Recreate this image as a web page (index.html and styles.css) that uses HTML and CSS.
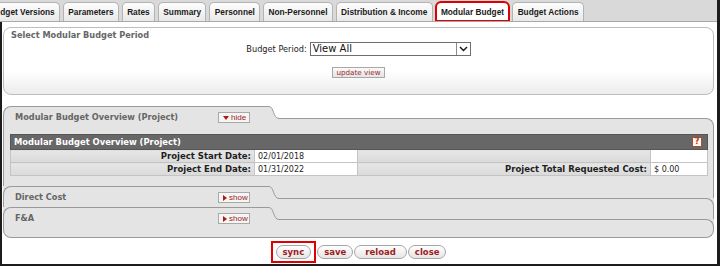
FILE: index.html
```html
<!DOCTYPE html>
<html>
<head>
<meta charset="utf-8">
<link rel="stylesheet" href="styles.css">
</head>
<body>
<div class="frame">
  <div class="tabs">
    <div class="tab first">dget Versions</div>
    <div class="tab">Parameters</div>
    <div class="tab">Rates</div>
    <div class="tab">Summary</div>
    <div class="tab">Personnel</div>
    <div class="tab">Non-Personnel</div>
    <div class="tab">Distribution &amp; Income</div>
    <div class="tab active">Modular Budget</div>
    <div class="tab">Budget Actions</div>
  </div>
  <div class="content">
    <div class="period">
      <div class="period-title">Select Modular Budget Period</div>
      <div class="period-row">
        <span class="period-label">Budget Period:</span>
        <span class="select"><span class="select-text">View All</span><span class="select-arrow"><svg width="9" height="6" viewBox="0 0 9 6"><path d="M1 1 L4.5 4.5 L8 1" fill="none" stroke="#111" stroke-width="1.4"/></svg></span></span>
      </div>
      <div class="period-btn-row"><span class="btn-update">update view</span></div>
    </div>

    <div class="panel">
      <div class="sec-head first-head">
        <div class="sec-tab"><span class="sec-title">Modular Budget Overview (Project)</span><span class="toggle"><svg width="6" height="4" viewBox="0 0 6 4"><path d="M0 0 L6 0 L3 4 Z" fill="#b01818"/></svg>hide</span></div>
        <svg class="curve" width="10" height="22" viewBox="0 0 10 22"><path d="M0 0.5 C5 0.5 4 12.5 10 12.5 L10 22 L0 22 Z" fill="#e4e4e4"/><path d="M0 0.5 C5 0.5 4 12.5 10 12.5" fill="none" stroke="#9a9a9a" stroke-width="1"/></svg>
        <div class="sec-right"><div class="sec-right-top"></div><div class="sec-right-line"></div></div>
      </div>
      <div class="sec-body">
        <table class="grid">
          <colgroup><col class="c1"><col class="c2"><col class="c3"><col class="c4"></colgroup>
          <tr class="hdr"><td colspan="4"><div class="hdr-in"><span>Modular Budget Overview (Project)</span><span class="help">?</span></div></td></tr>
          <tr><td class="lbl">Project Start Date:</td><td class="val">02/01/2018</td><td class="lbl"></td><td class="val"></td></tr>
          <tr><td class="lbl">Project End Date:</td><td class="val">01/31/2022</td><td class="lbl">Project Total Requested Cost:</td><td class="val">$ 0.00</td></tr>
        </table>
      </div>

      <div class="sec-head nested">
        <div class="sec-tab"><span class="sec-title">Direct Cost</span><span class="toggle"><svg width="4" height="6" viewBox="0 0 4 6"><path d="M0 0 L4 3 L0 6 Z" fill="#b01818"/></svg>show</span></div>
        <svg class="curve" width="10" height="21" viewBox="0 0 10 21"><path d="M0 0.5 C5 0.5 4 12.5 10 12.5" fill="none" stroke="#9a9a9a" stroke-width="1"/></svg>
        <div class="sec-right"><div class="sec-right-top"></div><div class="sec-right-line"></div></div>
      </div>

      <div class="sec-head nested">
        <div class="sec-tab"><span class="sec-title">F&amp;A</span><span class="toggle"><svg width="4" height="6" viewBox="0 0 4 6"><path d="M0 0 L4 3 L0 6 Z" fill="#b01818"/></svg>show</span></div>
        <svg class="curve" width="10" height="21" viewBox="0 0 10 21"><path d="M0 0.5 C5 0.5 4 12.5 10 12.5" fill="none" stroke="#9a9a9a" stroke-width="1"/></svg>
        <div class="sec-right"><div class="sec-right-top"></div><div class="sec-right-line"></div></div>
      </div>
      <div class="panel-foot"></div>
    </div>

    <div class="actions">
      <span class="mark"><span class="pill">sync</span></span>
      <span class="pill">save</span>
      <span class="pill wide">reload</span>
      <span class="pill">close</span>
    </div>
  </div>
</div>
</body>
</html>
```
FILE: styles.css
```css
* { box-sizing: border-box; }
html, body { margin: 0; padding: 0; background: #fff; }

.frame {
  width: 720px;
  height: 266px;
  border-right: 3px solid #1c1c1c;
  border-bottom: 2px solid #1c1c1c;
  overflow: hidden;
  display: flex;
  flex-direction: column;
  font-family: "DejaVu Sans", Verdana, sans-serif;
}

/* tabs */
.tabs {
  height: 22px;
  flex: none;
  background: #d9d9d9;
  border-bottom: 1px solid #a9a9a9;
  display: flex;
  align-items: flex-end;
  gap: 3px;
  overflow: hidden;
}
.tab {
  height: 19px;
  padding: 0 4.3px;
  border: 1px solid #b3b3b3;
  border-bottom: none;
  border-radius: 5px 5px 0 0;
  background: linear-gradient(#fdfdfd, #e9e9e9);
  font-family: "Liberation Sans", Arial, sans-serif;
  font-weight: bold;
  font-size: 8.3px;
  line-height: 18px;
  color: #1a1a1a;
  white-space: nowrap;
}
.tab.first { margin-left: -5px; }
.tab.active {
  background: #fff;
  outline: 2px solid #e10000;
  outline-offset: -1px;
}

/* content */
.content {
  flex: 1;
  border-left: 2px solid #1c1c1c;
  padding: 5px 3px 0 1px;
  display: flex;
  flex-direction: column;
}

.period {
  height: 68px;
  flex: none;
  border: 1px solid #bdbdbd;
  border-radius: 8px;
  background: linear-gradient(#fff 65%, #ececec);
  margin-bottom: 11px;
}
.period-title {
  font-weight: bold;
  font-size: 8.2px;
  color: #666;
  padding: 2px 0 0 7px;
  height: 14px;
}
.period-row {
  display: flex;
  justify-content: center;
  align-items: center;
  gap: 3px;
  height: 14px;
}
.period-label { font-size: 8.2px; color: #222; }
.select {
  width: 161px;
  height: 14px;
  border: 1px solid #6e6e6e;
  background: #fff;
  display: flex;
  align-items: center;
}
.select-text { flex: 1; font-size: 10px; color: #111; padding-left: 2px; line-height: 12px; }
.select-arrow {
  width: 14px;
  height: 12px;
  border-left: 1px solid #8a8a8a;
  display: flex;
  align-items: center;
  justify-content: center;
}
.period-btn-row {
  display: flex;
  justify-content: center;
  padding-top: 11px;
}
.btn-update {
  height: 11px;
  padding: 0 3px;
  border: 1px solid #a8a8a8;
  background: linear-gradient(#fafafa, #e4e4e4);
  font-size: 7.2px;
  line-height: 9px;
  color: #9c2a2a;
}

/* panel */
.panel { flex: none; display: flex; flex-direction: column; }
.sec-head { display: flex; height: 21px; }
.sec-head.first-head { height: 22px; }
.sec-tab {
  width: 266px;
  flex: none;
  border-top: 1px solid #9a9a9a;
  border-left: 1px solid #9a9a9a;
  border-top-left-radius: 8px;
  background: #e4e4e4;
  display: flex;
  align-items: flex-start;
  padding: 5px 0 0 11px;
}
.sec-title {
  width: 203px;
  font-weight: bold;
  font-size: 8.2px;
  color: #666;
  line-height: 11px;
}
.toggle {
  height: 11px;
  width: 32px;
  border: 1px solid #a9a9a9;
  background: #f5f5f5;
  font-family: "Liberation Sans", Arial, sans-serif;
  font-size: 8px;
  line-height: 9px;
  color: #9c1c1c;
  display: flex;
  align-items: center;
  gap: 2px;
  padding-left: 4px;
}
.curve { flex: none; display: block; }
.sec-right { flex: 1; display: flex; flex-direction: column; }
.sec-right-top { height: 12px; flex: none; }
.sec-right-line {
  flex: 1;
  border-top: 1px solid #9a9a9a;
  border-right: 1px solid #9a9a9a;
  border-top-right-radius: 8px;
  background: #e4e4e4;
}
.nested { background: #e4e4e4; }
.nested .sec-right-top { border-right: 1px solid #9a9a9a; }

.sec-body {
  height: 58px;
  border-left: 1px solid #9a9a9a;
  border-right: 1px solid #9a9a9a;
  background: #e4e4e4;
  padding: 6px 6px 0 6px;
}
.panel-foot {
  height: 10px;
  border: 1px solid #9a9a9a;
  border-top: none;
  border-radius: 0 0 8px 8px;
  background: #e4e4e4;
}

.grid {
  width: 697px;
  border-collapse: collapse;
  table-layout: fixed;
  font-size: 8px;
}
.c1 { width: 244px; }
.c2 { width: 103px; }
.c3 { width: 293px; }
.c4 { width: 57px; }
.grid td { border: 1px solid #c4c4c4; padding: 0; height: 13px; white-space: nowrap; }
.hdr td { height: 15px; background: #676767; border-color: #555; }
.hdr-in {
  display: flex;
  justify-content: space-between;
  align-items: center;
  padding: 0 5px 0 3px;
  color: #fff;
  font-weight: bold;
  font-size: 8.4px;
}
.help {
  width: 10px;
  height: 10px;
  border: 1px solid #a0522d;
  background: #fdf6f0;
  color: #b3341f;
  font-size: 8px;
  font-weight: bold;
  line-height: 8px;
  text-align: center;
}
.lbl {
  background: linear-gradient(#e6e6e6, #dadada);
  text-align: right;
  font-weight: bold;
  font-size: 8.5px;
  color: #1e1e1e;
  padding-right: 3px !important;
}
.val { background: #fff; color: #1e1e1e; padding-left: 3px !important; }

/* actions */
.actions {
  display: flex;
  justify-content: center;
  align-items: center;
  gap: 1px;
  margin-top: 3px;
  height: 21px;
}
.mark {
  border: 2px solid #e10000;
  padding: 2px 3px;
  display: flex;
}
.pill {
  height: 14px;
  padding: 0 6px;
  border: 1px solid #a6a6a6;
  border-radius: 8px;
  background: linear-gradient(#ffffff, #e6e6e6);
  font-weight: bold;
  font-size: 8.5px;
  line-height: 12px;
  color: #9c1c1c;
}
.pill.wide { padding: 0 10px; }
```
